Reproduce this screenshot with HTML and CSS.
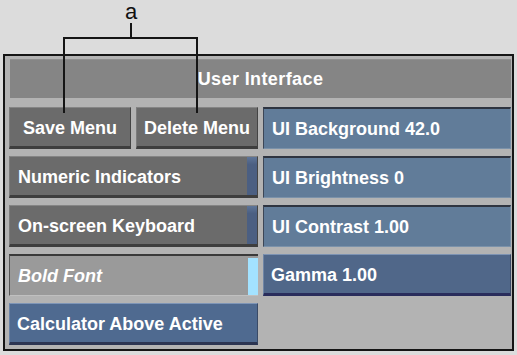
FILE: index.html
```html
<!DOCTYPE html>
<html>
<head>
<meta charset="utf-8">
<link rel="stylesheet" href="styles.css">
</head>
<body>
<div class="stage">
  <div class="panel">
    <div class="title">User Interface</div>
    <div class="grid">
      <div class="pair">
        <div class="btn gray center">Save Menu</div>
        <div class="btn gray center">Delete Menu</div>
      </div>
      <div class="btn field">UI Background 42.0</div>
      <div class="btn gray ind"><span>Numeric Indicators</span><i class="mark dark"></i></div>
      <div class="btn field">UI Brightness 0</div>
      <div class="btn gray ind"><span>On-screen Keyboard</span><i class="mark dark"></i></div>
      <div class="btn field">UI Contrast 1.00</div>
      <div class="btn light ind"><span class="it">Bold Font</span><i class="mark cyan"></i></div>
      <div class="btn blue">Gamma 1.00</div>
      <div class="btn blue2">Calculator Above Active</div>
    </div>
  </div>
  <svg class="callout" width="517" height="355" viewBox="0 0 517 355">
    <text x="131" y="19" text-anchor="middle" class="lbl">a</text>
    <path d="M131 23 V38 M64 113 V38 H197 V113" fill="none" stroke="#151515" stroke-width="2"/>
  </svg>
</div>
</body>
</html>
```
FILE: styles.css
```css
html, body {
  margin: 0;
  padding: 0;
  background: #dcdcdc;
}
.stage {
  position: relative;
  width: 517px;
  height: 355px;
  overflow: hidden;
  font-family: "Liberation Sans", Arial, sans-serif;
}
.panel {
  position: absolute;
  left: 3px;
  top: 54px;
  width: 507px;
  height: 293px;
  border: 2px solid #151515;
  background: #b3b3b3;
}
.title {
  margin: 3px 1px 0 5px;
  height: 39px;
  background: #858585;
  color: #fff;
  font-size: 18px;
  font-weight: bold;
  letter-spacing: 0.4px;
  display: flex;
  align-items: center;
  justify-content: center;
  padding-top: 2px;
  box-sizing: border-box;
  box-shadow: inset 0 1px 0 #8f8f8f;
}
.grid {
  margin: 9px 1px 0 4px;
  display: grid;
  grid-template-columns: 249px 248px;
  grid-auto-rows: 42px;
  column-gap: 5px;
  row-gap: 7px;
}
.pair {
  display: grid;
  grid-template-columns: 122px 122px;
  column-gap: 5px;
}
.btn {
  position: relative;
  box-sizing: border-box;
  color: #fff;
  font-size: 18px;
  font-weight: bold;
  display: flex;
  align-items: center;
  padding-left: 8px;
  padding-top: 2px;
  white-space: nowrap;
}
.center {
  justify-content: center;
  padding-left: 0;
}
.gray {
  background: #6b6b6b;
  border-top: 1px solid #858585;
  border-left: 1px solid #7c7c7c;
  border-right: 1px solid #444;
  border-bottom: 3px solid #3e3e3e;
}
.light {
  background: #9a9a9a;
  border-top: 2px solid #3a3a3a;
  border-left: 1px solid #555;
  border-bottom: 1px solid #c0c0c0;
}
.field {
  background: #617c99;
  border-top: 2px solid #2e3440;
  border-left: 1px solid #3c4656;
  border-right: 1px solid #7890a8;
  border-bottom: 1px solid #7b92aa;
  padding-left: 8px;
}
.blue {
  background: #506789;
  border-top: 1px solid #7d93b3;
  border-left: 1px solid #6f85a5;
  border-right: 1px solid #3a4a66;
  border-bottom: 3px solid #2a2d5c;
  padding-left: 7px;
}
.blue2 {
  background: #4f6a90;
  border-top: 1px solid #7e95b7;
  border-left: 1px solid #6b84a8;
  border-right: 1px solid #3a4a66;
  border-bottom: 3px solid #2c3552;
  padding-left: 7px;
}
.ind span {
  flex: 1;
}
.it {
  font-style: italic;
}
.mark {
  align-self: stretch;
  width: 10px;
  margin-top: -2px;
}
.mark.dark {
  background: linear-gradient(#5e7598, #4b5f82 20%, #4b5f82);
}
.mark.cyan {
  background: #a3e2ff;
  margin-top: 0;
}
.callout {
  position: absolute;
  left: 0;
  top: 0;
  pointer-events: none;
}
.lbl {
  font-family: "Liberation Sans", Arial, sans-serif;
  font-size: 22px;
  fill: #111;
}
```
